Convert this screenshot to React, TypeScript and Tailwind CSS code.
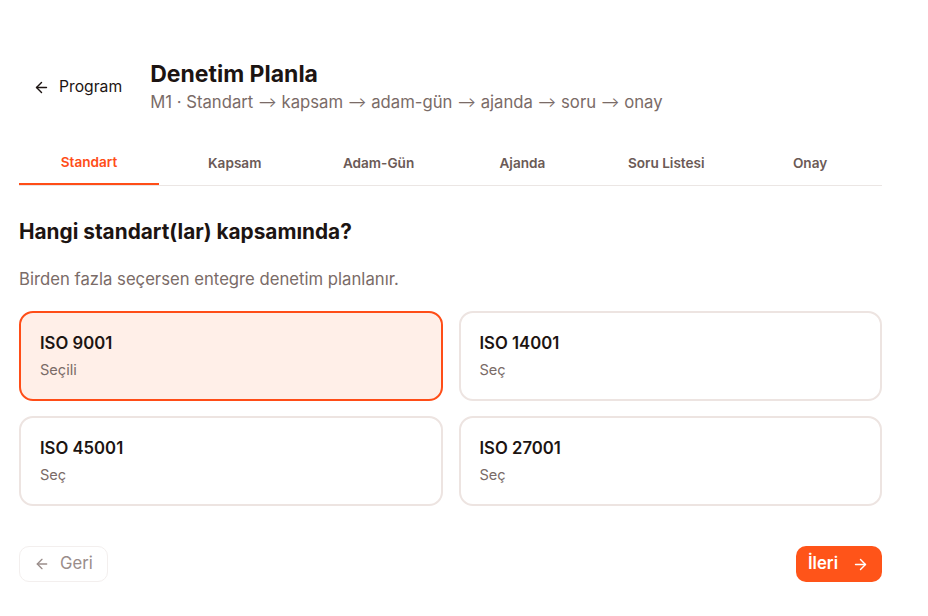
import { ArrowLeft, ArrowRight } from "lucide-react";

const tabs = ["Standart", "Kapsam", "Adam-Gün", "Ajanda", "Soru Listesi", "Onay"];

const steps = ["Standart", "kapsam", "adam-gün", "ajanda", "soru", "onay"];

const standards = [
  { name: "ISO 9001", selected: true },
  { name: "ISO 14001", selected: false },
  { name: "ISO 45001", selected: false },
  { name: "ISO 27001", selected: false },
];

const App = () => {
  return (
    <div className="min-h-screen bg-white font-['Inter',sans-serif] text-[#1c1412]">
      <div className="w-[863px] ml-[19px] pt-[60px] pb-8">
        <div className="flex items-center">
          <button className="flex items-center gap-[9px] pl-[14px] pr-[7px] h-9 text-[15.7px] text-[#1c1412]">
            <ArrowLeft size={17} strokeWidth={2} />
            Program
          </button>
          <div className="ml-[21px]">
            <h1 className="text-[23px] leading-7 font-bold">Denetim Planla</h1>
            <p className="mt-[2px] h-6 text-[16.7px] leading-6 text-[#7a6b67]">
              M1 ·{" "}
              {steps.map((s, i) => (
                <span key={s}>
                  {i > 0 && (
                    <>
                      {" "}
                      <span className="text-[14px] relative -top-px">⟶</span>{" "}
                    </>
                  )}
                  {s}
                </span>
              ))}
            </p>
          </div>
        </div>

        <div className="mt-[27px] grid grid-cols-6 border-b border-[#ebe6e4]">
          {tabs.map((tab, i) => (
            <div
              key={tab}
              className={
                i === 0
                  ? "relative -mb-px h-[44px] flex items-center justify-center text-[13.6px] font-semibold text-[#ff4d17] border-b-2 border-[#ff4d17] w-[140px]"
                  : "h-[44px] flex items-center justify-center text-[13.6px] font-semibold text-[#6b5a56]"
              }
            >
              {tab}
            </div>
          ))}
        </div>

        <h2 className="mt-[32px] text-[20.8px] leading-7 font-bold">Hangi standart(lar) kapsamında?</h2>
        <p className="mt-[21px] text-[16.7px] leading-6 text-[#7a6b67]">
          Birden fazla seçersen entegre denetim planlanır.
        </p>

        <div className="mt-[20px] grid grid-cols-2 gap-x-4 gap-y-[15px]">
          {standards.map((s) => (
            <div
              key={s.name}
              className={
                s.selected
                  ? "h-[90px] rounded-[14px] border-2 border-[#ff4d17] bg-[#ffefe8] px-[19px] pt-[18px]"
                  : "h-[90px] rounded-[14px] border-2 border-[#ede4e1] bg-white px-[19px] pt-[18px]"
              }
            >
              <div className="text-[16.7px] leading-6 font-semibold">{s.name}</div>
              <div className="mt-[5px] text-[14.6px] leading-5 text-[#7a6b67]">
                {s.selected ? "Seçili" : "Seç"}
              </div>
            </div>
          ))}
        </div>

        <div className="mt-[40px] flex items-center justify-between">
          <button className="flex items-center gap-[10px] h-9 px-[14px] rounded-[10px] border border-[#f3efee] text-[16.7px] text-[#9a8d8a]">
            <ArrowLeft size={16} strokeWidth={2} />
            Geri
          </button>
          <button className="flex items-center gap-[14px] h-9 pl-[12px] pr-[13px] rounded-[10px] bg-[#ff5419] text-[16.7px] font-semibold text-white">
            İleri
            <ArrowRight size={17} strokeWidth={2} />
          </button>
        </div>
      </div>
    </div>
  );
};

export default App;
